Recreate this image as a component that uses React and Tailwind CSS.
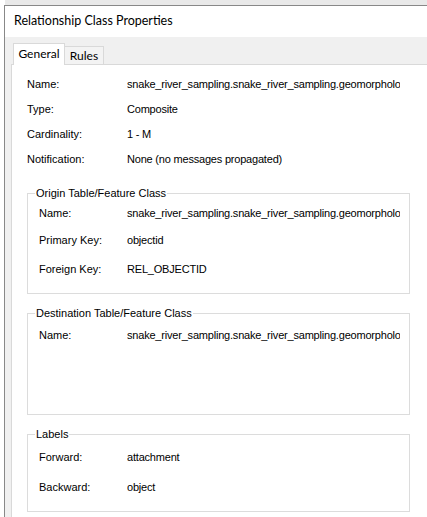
import React from 'react'

const longName = 'snake_river_sampling.snake_river_sampling.geomorphology_attachments'

const general = [
  ['Name:', longName],
  ['Type:', 'Composite'],
  ['Cardinality:', '1 - M'],
  ['Notification:', 'None (no messages propagated)'],
]

const uiFont = { fontFamily: 'Lato, "Noto Sans", sans-serif' }

function Row({ label, value, h = 'h-[25px]', labelW = 'w-[100px]' }) {
  return (
    <div className={`flex items-center ${h}`}>
      <div className={`${labelW} shrink-0`}>{label}</div>
      <div className="w-[273px] overflow-hidden whitespace-nowrap tracking-[-0.2px]">{value}</div>
    </div>
  )
}

function Group({ title, height, children }) {
  return (
    <div className={`w-[383px] border border-[#dcdcdc] ${height}`}>
      <div className="-mt-[7px] ml-[7px] w-fit bg-white px-[1px] leading-[13px]">{title}</div>
      <div className="pl-[11px]">{children}</div>
    </div>
  )
}

export default function App() {
  return (
    <div
      className="h-[517px] w-[427px] overflow-hidden bg-white text-[11px] text-black"
      style={{ fontFamily: '"Liberation Sans", Arial, sans-serif' }}
    >
      <div className="ml-[5px] h-[5px] bg-[#e9e9e9]" />
      <div className="ml-[4px] flex h-[512px] flex-col border-l border-t border-[#888888]">
        {/* title bar */}
        <div className="flex h-[31px] shrink-0 items-center pl-[9px] text-[12.5px]" style={uiFont}>
          Relationship Class Properties
        </div>

        <div className="flex flex-1 flex-col bg-[#f0f0f0] pl-[6px]">
          {/* tabs */}
          <div className="flex h-[27px] shrink-0 items-end pl-[2px] text-[12px]" style={uiFont}>
            <div className="relative z-10 -mb-px flex h-[22px] w-[52px] items-center justify-center border border-b-0 border-[#d9d9d9] bg-white pb-[2px]">
              General
            </div>
            <div className="flex h-[18px] w-[39px] items-center justify-center border border-b-0 border-l-0 border-[#d9d9d9] bg-[#f3f3f3]">
              Rules
            </div>
          </div>

          {/* tab page */}
          <div className="flex-1 border-l border-t border-[#d9d9d9] bg-white pl-[15px] pt-[7px]">
            {general.map(([l, v]) => (
              <Row key={l} label={l} value={v} />
            ))}

            <div className="mt-[21px]">
              <Group title="Origin Table/Feature Class" height="h-[101px]">
                <Row label="Name:" value={longName} labelW="w-[88px]" h="h-[26px]" />
                <Row label="Primary Key:" value="objectid" labelW="w-[88px]" h="h-[28px]" />
                <Row label="Foreign Key:" value="REL_OBJECTID" labelW="w-[88px]" h="h-[31px]" />
              </Group>
            </div>

            <div className="mt-[19px]">
              <Group title="Destination Table/Feature Class" height="h-[102px]">
                <Row label="Name:" value={longName} labelW="w-[88px]" h="h-[30px]" />
              </Group>
            </div>

            <div className="mt-[19px]">
              <Group title="Labels" height="h-[78px]">
                <Row label="Forward:" value="attachment" labelW="w-[88px]" h="h-[32px]" />
                <Row label="Backward:" value="object" labelW="w-[88px]" h="h-[28px]" />
              </Group>
            </div>
          </div>
        </div>
      </div>
    </div>
  )
}
